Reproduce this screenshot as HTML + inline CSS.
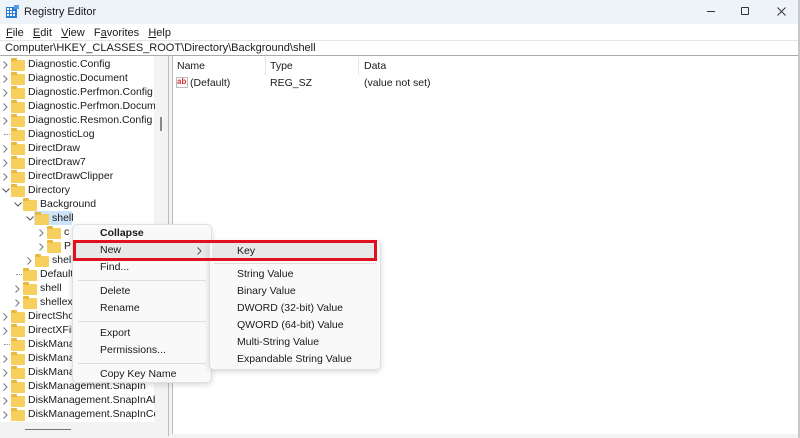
<!DOCTYPE html>
<html><head><meta charset="utf-8"><style>
*{margin:0;padding:0;box-sizing:border-box}
body{width:800px;height:438px;overflow:hidden;background:#f3f3f3;font-family:"Liberation Sans",sans-serif;font-size:10.5px;color:#1a1a1a;position:relative}
.a{position:absolute;white-space:nowrap}
.f{position:absolute;width:14px;height:11px;background:#f6cf5c;border-radius:1px}
.f:before{content:"";position:absolute;left:0;top:-2px;width:6px;height:3px;background:#e9b93e;border-radius:1px 1px 0 0}
.mi{position:absolute;left:100px}
.si{position:absolute;left:237px}
</style></head><body>
<div class="a" style="left:0;top:0;width:800px;height:24px;background:#eef3f9"></div>
<svg class="a" style="left:6px;top:5px" width="13" height="13"><rect x="0" y="2" width="11" height="11" fill="#2a7bd6"/><g fill="#fff"><rect x="1" y="3" width="2" height="2"/><rect x="4" y="3" width="2" height="2"/><rect x="1" y="6" width="2" height="2"/><rect x="4" y="6" width="2" height="2"/><rect x="7" y="6" width="2" height="2"/><rect x="1" y="9" width="2" height="2"/><rect x="4" y="9" width="2" height="2"/><rect x="7" y="9" width="2" height="2"/></g><rect x="8" y="0" width="5" height="4" fill="#4aa0ef"/></svg>
<div class="a" style="left:24px;top:6px;font-size:11px">Registry Editor</div>
<div class="a" style="left:707px;top:11px;width:8px;height:1px;background:#333"></div>
<div class="a" style="left:741px;top:7px;width:8px;height:8px;border:1px solid #333;border-radius:1px"></div>
<svg class="a" style="left:777px;top:7px" width="9" height="9"><path d="M0.5 0.5L8.5 8.5M8.5 0.5L0.5 8.5" stroke="#333" stroke-width="1"/></svg>
<div class="a" style="left:0;top:24px;width:800px;height:32px;background:#fff"></div>
<div class="a" style="left:6px;top:27px;font-size:11px"><u>F</u>ile&nbsp;&nbsp;&nbsp;<u>E</u>dit&nbsp;&nbsp;&nbsp;<u>V</u>iew&nbsp;&nbsp;&nbsp;F<u>a</u>vorites&nbsp;&nbsp;&nbsp;<u>H</u>elp</div>
<div class="a" style="left:0;top:40px;width:800px;height:1px;background:#e6e6e6"></div>
<div class="a" style="left:5px;top:42px;font-size:11px">Computer\HKEY_CLASSES_ROOT\Directory\Background\shell</div>
<div class="a" style="left:0;top:55px;width:800px;height:1px;background:#aaa"></div>
<div class="a" style="left:0;top:56px;width:154px;height:366px;background:#fff"></div>
<div class="a" style="left:160px;top:117px;width:2px;height:14px;background:#888"></div>
<div class="a" style="left:25px;top:429px;width:46px;height:1px;background:#777"></div>
<div class="a" style="left:168px;top:56px;width:1px;height:380px;background:#bbb"></div>
<div class="a" style="left:172px;top:56px;width:626px;height:378px;background:#fff;border-left:1px solid #bbb"></div>
<div class="a" style="left:798px;top:0;width:2px;height:438px;background:#c8c8c8"></div>
<div class="a" style="left:265px;top:57px;width:1px;height:18px;background:#e5e5e5"></div>
<div class="a" style="left:358px;top:57px;width:1px;height:18px;background:#e5e5e5"></div>
<div class="a" style="left:177px;top:60px">Name</div>
<div class="a" style="left:270px;top:60px">Type</div>
<div class="a" style="left:364px;top:60px">Data</div>
<div class="a" style="left:176px;top:77px;width:12px;height:11px;border:1px solid #bbb;background:#fff;font-size:8px;color:#c33;line-height:8px;font-weight:bold">ab</div>
<div class="a" style="left:190px;top:77px">(Default)</div>
<div class="a" style="left:270px;top:77px">REG_SZ</div>
<div class="a" style="left:364px;top:77px">(value not set)</div>
<div id="tree"></div>
<script>
var rows=[[0,1,"Diagnostic.Config"],[0,1,"Diagnostic.Document"],[0,1,"Diagnostic.Perfmon.Config"],[0,1,"Diagnostic.Perfmon.Document"],[0,1,"Diagnostic.Resmon.Config"],[0,0,"DiagnosticLog"],[0,1,"DirectDraw"],[0,1,"DirectDraw7"],[0,1,"DirectDrawClipper"],[0,2,"Directory"],[1,2,"Background"],[2,2,"shell"],[3,1,"c"],[3,1,"P"],[2,1,"shell"],[1,0,"Default"],[1,1,"shell"],[1,1,"shellex"],[0,1,"DirectShow"],[0,1,"DirectXFile"],[0,0,"DiskManag"],[0,1,"DiskManag"],[0,1,"DiskManag"],[0,1,"DiskManagement.SnapIn"],[0,1,"DiskManagement.SnapInAbout"],[0,1,"DiskManagement.SnapInComp"]];
var h="";
rows.forEach(function(r,i){var y=57+i*14,x=r[0]*12;
if(i==11)h+='<div class="a" style="left:34px;top:'+y+'px;width:38px;height:14px;background:#cce4f7"></div>';
if(r[1]==1)h+='<svg class="a" style="left:'+(x+3)+'px;top:'+(y+4)+'px" width="5" height="8"><path d="M0.5 0.5L4 4L0.5 7.5" fill="none" stroke="#777"/></svg>';
if(r[1]==2)h+='<svg class="a" style="left:'+(x+2)+'px;top:'+(y+5)+'px" width="8" height="5"><path d="M0.5 0.5L4 4L7.5 0.5" fill="none" stroke="#555"/></svg>';
if(r[1]==0)h+='<div class="a" style="left:'+(x+4)+'px;top:'+(y+7)+'px;width:6px;border-top:1px dotted #999"></div>';
h+='<div class="f" style="left:'+(x+11)+'px;top:'+(y+3)+'px"></div>';
h+='<div class="a" style="left:'+(x+28)+'px;top:'+(y+1)+'px;width:'+(127-x)+'px;overflow:hidden">'+r[2]+'</div>';});
document.getElementById("tree").innerHTML=h;
</script>
<div class="a" style="left:72px;top:224px;width:140px;height:159px;background:#f9f9f9;border:1px solid #e0e0e0;border-radius:5px;box-shadow:0 2px 6px rgba(0,0,0,.15)"></div>
<div class="a" style="left:74px;top:242px;width:136px;height:17px;background:#e8e8e8;border-radius:3px"></div>
<div class="mi" style="top:227px;font-weight:bold">Collapse</div>
<div class="mi" style="top:244px">New</div>
<svg class="a" style="left:197px;top:247px" width="5" height="8"><path d="M0.5 0.5L4 4L0.5 7.5" fill="none" stroke="#555"/></svg>
<div class="mi" style="top:261px">Find...</div>
<div class="a" style="left:78px;top:280px;width:128px;height:1px;background:#ddd"></div>
<div class="mi" style="top:285px">Delete</div>
<div class="mi" style="top:302px">Rename</div>
<div class="a" style="left:78px;top:321px;width:128px;height:1px;background:#ddd"></div>
<div class="mi" style="top:327px">Export</div>
<div class="mi" style="top:344px">Permissions...</div>
<div class="a" style="left:78px;top:363px;width:128px;height:1px;background:#ddd"></div>
<div class="mi" style="top:368px">Copy Key Name</div>
<div class="a" style="left:209px;top:240px;width:172px;height:130px;background:#f9f9f9;border:1px solid #e0e0e0;border-radius:5px;box-shadow:0 2px 6px rgba(0,0,0,.15)"></div>
<div class="a" style="left:212px;top:243px;width:164px;height:16px;background:#e8e8e8"></div>
<div class="si" style="top:245px">Key</div>
<div class="a" style="left:214px;top:263px;width:162px;height:1px;background:#ddd"></div>
<div class="si" style="top:268px">String Value</div>
<div class="si" style="top:285px">Binary Value</div>
<div class="si" style="top:302px">DWORD (32-bit) Value</div>
<div class="si" style="top:319px">QWORD (64-bit) Value</div>
<div class="si" style="top:336px">Multi-String Value</div>
<div class="si" style="top:353px">Expandable String Value</div>
<div class="a" style="left:73px;top:240px;width:304px;height:21px;border:3px solid #e0101e"></div>
</body></html>
